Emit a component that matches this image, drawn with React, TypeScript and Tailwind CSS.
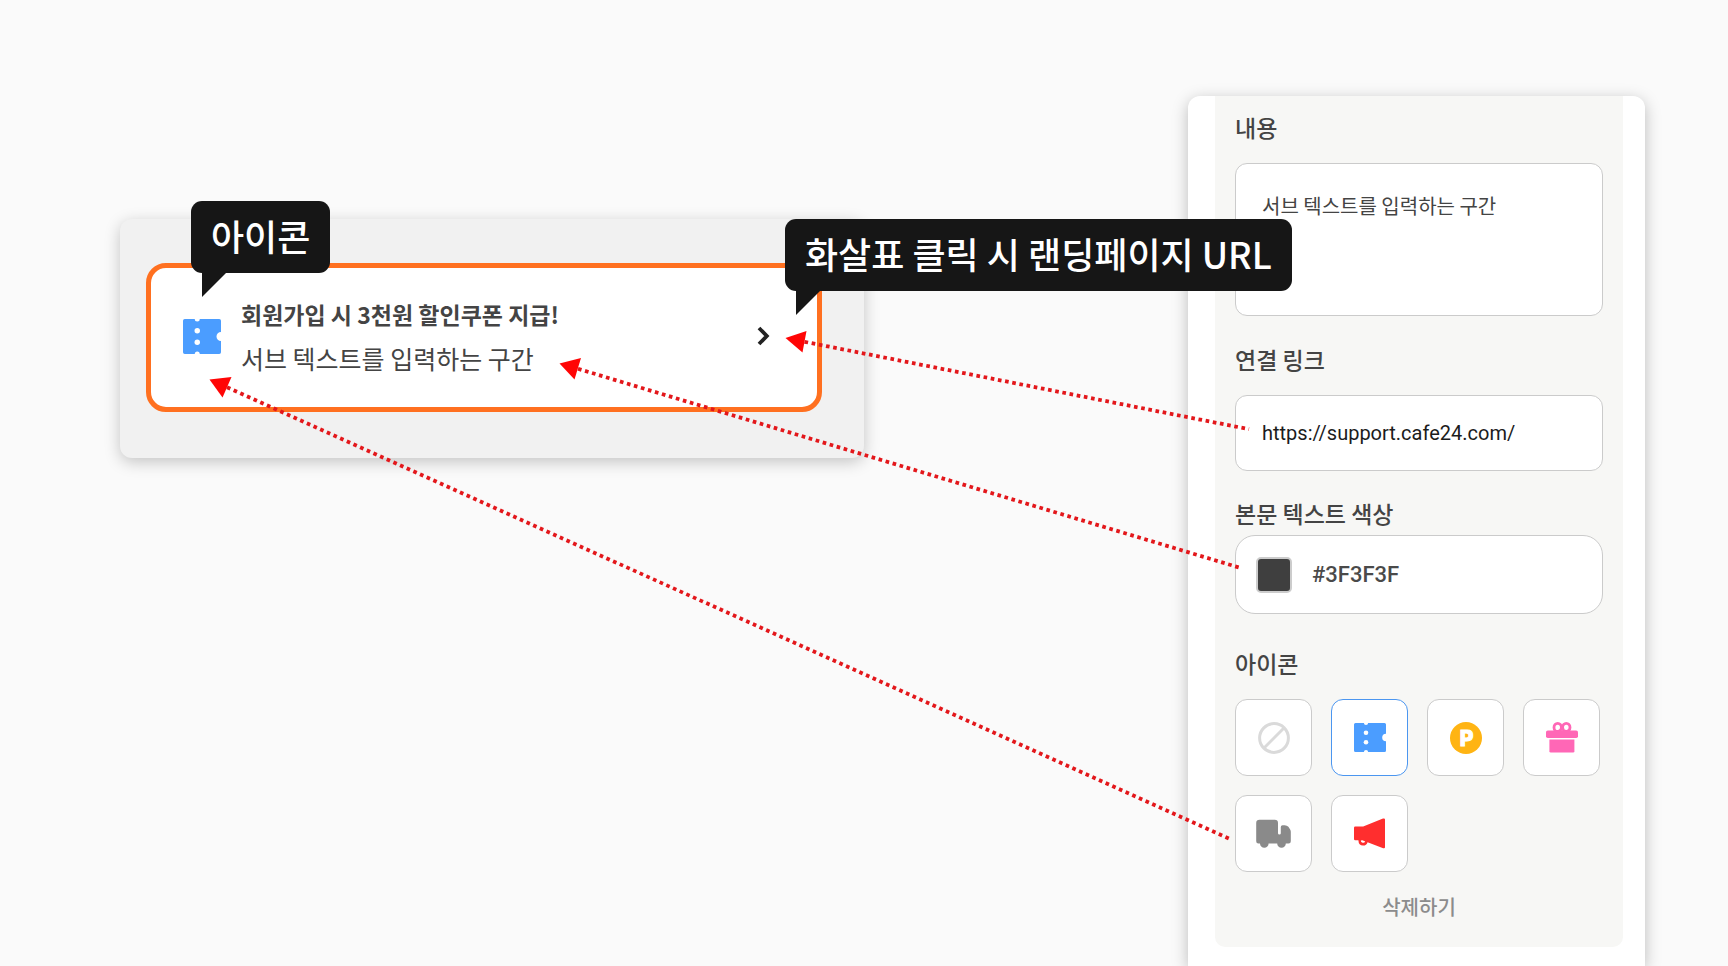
import { useState } from "react";
import type { ReactNode } from "react";

function TicketIcon({ className }: { className: string }) {
  return (
    <svg viewBox="0 0 32 29" preserveAspectRatio="none" className={className} aria-hidden="true">
      <path
        fill="#4b9dff"
        d="M1.5 0H9.9A2.1 2.1 0 0 0 14.1 0H30.5Q32 0 32 1.5V10.7A3.8 3.8 0 0 0 32 18.3V27.5Q32 29 30.5 29H14.1A2.1 2.1 0 0 0 9.9 29H1.5Q0 29 0 27.5V1.5Q0 0 1.5 0Z"
      />
      <circle cx="12" cy="9.7" r="2.3" fill="#fff" />
      <circle cx="12" cy="19.3" r="2.3" fill="#fff" />
    </svg>
  );
}

function NoneIcon() {
  return (
    <svg viewBox="0 0 32 32" className="size-8" aria-hidden="true">
      <g fill="none" stroke="#dadada" strokeWidth="3">
        <circle cx="16" cy="16" r="14.4" />
        <path d="M26.2 5.8 5.8 26.2" />
      </g>
    </svg>
  );
}

function PointIcon() {
  return (
    <svg viewBox="0 0 32 32" className="size-8" aria-hidden="true">
      <circle cx="16" cy="16" r="16" fill="#ffb413" />
      <text
        x="16.5"
        y="23.7"
        textAnchor="middle"
        fill="#fff"
        stroke="#fff"
        strokeWidth="1"
        className="font-['Inter',sans-serif] text-[21px] font-extrabold"
      >
        P
      </text>
    </svg>
  );
}

function GiftIcon() {
  return (
    <svg viewBox="0 0 32 31" className="h-[31px] w-8" aria-hidden="true">
      <g fill="none" stroke="#ff67b6" strokeWidth="2.8">
        <ellipse cx="11.7" cy="5.4" rx="3.7" ry="4" />
        <ellipse cx="20.3" cy="5.4" rx="3.7" ry="4" />
      </g>
      <rect x="0" y="8.4" width="32" height="7.6" rx="1.8" fill="#ff67b6" />
      <path fill="#ff67b6" d="M3.4 17.6H28.4V29.2Q28.4 30.6 27 30.6H4.8Q3.4 30.6 3.4 29.2Z" />
    </svg>
  );
}

function TruckIcon() {
  return (
    <svg viewBox="0 0 35 29" className="h-[29px] w-[35px]" aria-hidden="true">
      <path
        fill="#8a8a8a"
        d="M3.5 0.8H18.7Q22 .8 22 4.1V14.2Q22 15.4 23.4 15.4Q24.8 15.4 24.8 14.2V8Q24.8 6.2 26.6 6.2H28.6Q31 6.2 32.4 7.8L34 10.2Q34.8 11.3 34.8 12.7V22.2Q34.8 24.4 32.6 24.4H29.8A4.2 4.2 0 0 1 21.2 24.4H12.6A4.2 4.2 0 0 1 4 24.4H2.4Q.2 24.4 .2 22.2V4.1Q.2 .8 3.5 .8Z"
      />
    </svg>
  );
}

function MegaphoneIcon() {
  return (
    <svg viewBox="0 0 31 31" className="size-[31px]" aria-hidden="true">
      <path
        fill="#ff2e2e"
        d="M1.2 8.6H9.2L29 .6Q31 0 31 1.6V29.2Q31 30.8 29.2 30.2L13.6 24.2Q12.6 27.6 9 27.6Q4.6 27.6 4.4 22.2H1.2Q0 22.2 0 21V9.8Q0 8.6 1.2 8.6Z"
      />
      <path fill="#fff" d="M6.8 22.4A2.3 2.3 0 0 0 11.2 23.4L8.4 22.2Z" />
    </svg>
  );
}

function Callout({ children, className }: { children: ReactNode; className: string }) {
  return (
    <div className={`absolute z-20 ${className}`}>
      <div className="flex h-[72px] items-center rounded-[11px] bg-[#161616] px-5 pb-1 text-4xl font-medium whitespace-nowrap text-white">
        {children}
      </div>
      <svg viewBox="0 0 24 24" className="ml-[11px] size-6" aria-hidden="true">
        <path d="M0 0H24L0 24Z" fill="#161616" />
      </svg>
    </div>
  );
}

const arrows = [
  { head: "785.5,338 806.5,331 802.5,352.5", line: "M804.5 341.8 1249 429.2" },
  { head: "559.5,363.5 581,358 574.5,379.5", line: "M578 368.8 1239 567.5" },
  { head: "209.5,379.5 231.5,377 222.5,397.5", line: "M227 387.3 1229 838.5" },
];

function Arrows() {
  return (
    <svg
      viewBox="0 0 1728 966"
      className="pointer-events-none absolute top-0 left-0 z-10 w-full"
      aria-hidden="true"
    >
      {arrows.map((a) => (
        <g key={a.head}>
          <path d={a.line} fill="none" stroke="#e3171b" strokeWidth="3.8" strokeDasharray="3.65 3.65" />
          <polygon points={a.head} fill="#ff0505" />
        </g>
      ))}
    </svg>
  );
}

const icons: { name: string; icon: ReactNode }[] = [
  { name: "없음", icon: <NoneIcon /> },
  { name: "쿠폰", icon: <TicketIcon className="h-[29px] w-8" /> },
  { name: "포인트", icon: <PointIcon /> },
  { name: "선물", icon: <GiftIcon /> },
  { name: "배송", icon: <TruckIcon /> },
  { name: "알림", icon: <MegaphoneIcon /> },
];

const labelClass = "block text-[23px] leading-8 font-medium text-[#444]";

export default function App() {
  const [content, setContent] = useState("서브 텍스트를 입력하는 구간");
  const [link, setLink] = useState("https://support.cafe24.com/");
  const [color, setColor] = useState("#3F3F3F");
  const [selected, setSelected] = useState(1);

  return (
    <div className="min-h-screen overflow-hidden bg-[#fafafa] font-['Noto_Sans_CJK_KR',sans-serif]">
      <main className="relative mx-auto flex min-h-screen max-w-[1728px] gap-[324px] pr-[83px] pl-[120px]">
        <section className="relative mt-[219px] flex-1 self-start rounded-xl bg-[#f1f1f1] pt-11 pr-[42px] pb-[46px] pl-[26px] shadow-[0_4px_16px_rgba(0,0,0,0.22)]">
          <Callout className="-top-[18px] left-[71px]">아이콘</Callout>
          <Callout className="top-0 left-[665px]">화살표 클릭 시 랜딩페이지 URL</Callout>
          <div className="flex items-center rounded-[20px] border-5 border-[#ff7020] bg-white pt-6 pr-[47px] pb-[27px] pl-8">
            <TicketIcon className="h-[35px] w-[38px] shrink-0" />
            <div className="ml-5 flex-1 text-[#444]">
              <p className="text-[23px] leading-[44px] font-bold">회원가입 시 3천원 할인쿠폰 지급!</p>
              <p className="text-[25px] leading-[44px]">서브 텍스트를 입력하는 구간</p>
            </div>
            <a href="#landing" aria-label="랜딩페이지로 이동">
              <svg viewBox="0 0 13 20" className="h-5 w-[13px]" aria-hidden="true">
                <path d="M2 2 9.8 10 2 18" fill="none" stroke="#222" strokeWidth="3.8" />
              </svg>
            </a>
          </div>
        </section>

        <section className="mt-24 w-[457px] shrink-0 rounded-t-xl bg-white pr-[22px] pb-[19px] pl-[27px] shadow-[0_4px_16px_rgba(0,0,0,0.25)]">
          <form className="rounded-b-[10px] bg-[#f7f7f5] px-5 pt-[15px] pb-6">
            <label htmlFor="content" className={labelClass}>
              내용
            </label>
            <textarea
              id="content"
              value={content}
              onChange={(e) => setContent(e.target.value)}
              className="mt-5 block h-[153px] w-full resize-none rounded-xl border border-[#cbcbcb] bg-white px-[26px] py-[26px] text-xl leading-8 text-[#444]"
            />
            <label htmlFor="link" className={`mt-[27px] ${labelClass}`}>
              연결 링크
            </label>
            <input
              id="link"
              type="text"
              value={link}
              onChange={(e) => setLink(e.target.value)}
              className="mt-5 block h-[76px] w-full rounded-xl border border-[#cbcbcb] bg-white px-[26px] font-['Roboto',sans-serif] text-xl text-[#1c1c1c]"
            />
            <label htmlFor="color" className={`mt-[26px] ${labelClass}`}>
              본문 텍스트 색상
            </label>
            <div className="mt-[6px] flex h-[79px] items-center rounded-[20px] border border-[#cbcbcb] bg-white px-5">
              <span className="size-9 shrink-0 rounded-[5px] border-2 border-[#cccccc] bg-[#3f3f3f]" />
              <input
                id="color"
                type="text"
                value={color}
                onChange={(e) => setColor(e.target.value)}
                className="ml-5 h-10 w-full min-w-0 bg-transparent font-['Roboto',sans-serif] text-[22px] font-medium text-[#4a4a4a]"
              />
            </div>
            <fieldset className="mt-[33px]">
              <legend className={labelClass}>아이콘</legend>
              <div className="mt-5 flex flex-wrap gap-[19px]">
                {icons.map(({ name, icon }, i) => (
                  <button
                    key={name}
                    type="button"
                    aria-label={name}
                    aria-pressed={selected === i}
                    onClick={() => setSelected(i)}
                    className={`flex size-[77px] items-center justify-center rounded-xl border bg-white ${
                      selected === i ? "border-[#4b96f0]" : "border-[#cbcbcb]"
                    }`}
                  >
                    {icon}
                  </button>
                ))}
              </div>
            </fieldset>
            <button
              type="button"
              className="mx-auto mt-[19px] block text-xl leading-8 font-medium text-[#8c8c8c]"
            >
              삭제하기
            </button>
          </form>
        </section>
        <Arrows />
      </main>
    </div>
  );
}
